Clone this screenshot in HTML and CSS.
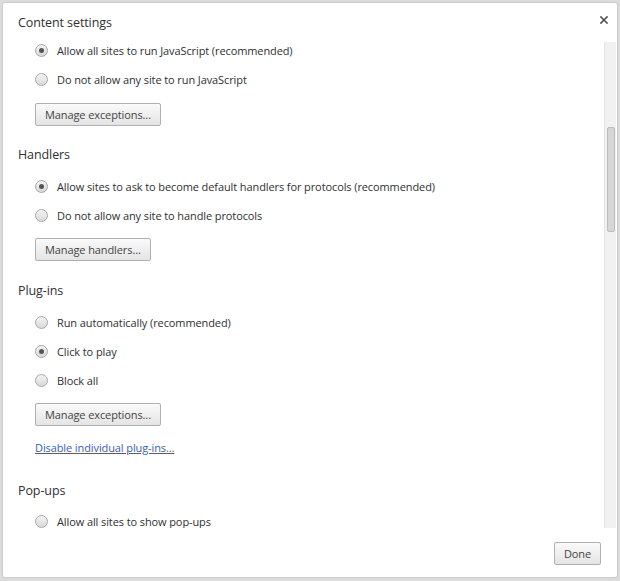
FILE: index.html
```html
<!DOCTYPE html>
<html lang="en">

    <head>
        <meta charset="UTF-8">
        <meta name="viewport" content="width=device-width, initial-scale=1.0">
        <title>Content settings</title>
        <link rel="stylesheet" href="styles.css">
    </head>

    <body>
        <div class="dialog">
            <div class="dialog-head">
                <h1>Content settings</h1>
                <button type="button" class="close" aria-label="Close">
                    <svg width="8" height="8" viewBox="0 0 8 8">
                        <path d="M1 1 L7 7 M7 1 L1 7" stroke="#555" stroke-width="1.7" stroke-linecap="square"/>
                    </svg>
                </button>
            </div>

            <div class="dialog-body">
                <div class="content">
                    <section class="group">
                        <label class="option"><span class="radio checked"></span>Allow all sites to run JavaScript (recommended)</label>
                        <label class="option"><span class="radio"></span>Do not allow any site to run JavaScript</label>
                        <button type="button" class="btn">Manage exceptions...</button>
                    </section>

                    <section class="group">
                        <h2>Handlers</h2>
                        <div class="options">
                            <label class="option"><span class="radio checked"></span>Allow sites to ask to become default handlers for protocols (recommended)</label>
                            <label class="option"><span class="radio"></span>Do not allow any site to handle protocols</label>
                        </div>
                        <button type="button" class="btn">Manage handlers...</button>
                    </section>

                    <section class="group plugins">
                        <h2>Plug-ins</h2>
                        <div class="options">
                            <label class="option"><span class="radio"></span>Run automatically (recommended)</label>
                            <label class="option"><span class="radio checked"></span>Click to play</label>
                            <label class="option"><span class="radio"></span>Block all</label>
                        </div>
                        <button type="button" class="btn">Manage exceptions...</button>
                        <a href="#" class="link">Disable individual plug-ins...</a>
                    </section>

                    <section class="group popups">
                        <h2>Pop-ups</h2>
                        <div class="options">
                            <label class="option"><span class="radio"></span>Allow all sites to show pop-ups</label>
                        </div>
                    </section>
                </div>

                <div class="scrollbar">
                    <div class="thumb"></div>
                </div>
            </div>

            <div class="dialog-foot">
                <button type="button" class="btn done">Done</button>
            </div>
        </div>
    </body>

</html>
```

FILE: styles.css
```css
html,
body {
    margin: 0;
    height: 100%;
}

body {
    background: #dcdcdc;
    padding: 3px 3px 4px 3px;
    box-sizing: border-box;
    font-family: "Open Sans", "Noto Sans", sans-serif;
    font-size: 11px;
    letter-spacing: -0.1px;
    color: #303030;
}

.dialog {
    height: 100%;
    background: #fff;
    border-radius: 2px;
    box-shadow: 0 0 2px rgba(0, 0, 0, 0.25);
    display: flex;
    flex-direction: column;
}

.dialog-head {
    height: 33px;
    display: flex;
    justify-content: space-between;
    align-items: flex-start;
    padding: 0 9px 0 15px;
}

.dialog-head h1 {
    margin: 10px 0 0 0;
    font-size: 12.5px;
    font-weight: normal;
    line-height: 20px;
}

.close {
    margin-top: 9px;
    padding: 0;
    border: 0;
    background: none;
    width: 8px;
    height: 8px;
}

.dialog-body {
    flex: 1;
    display: flex;
    min-height: 0;
}

.content {
    flex: 1;
    overflow: hidden;
    padding-left: 15px;
}

.group h2 {
    margin: 19px 0 7px 0;
    font-size: 12.5px;
    font-weight: normal;
    line-height: 20px;
}

.plugins h2 {
    margin-top: 20px;
}

.option {
    display: flex;
    align-items: center;
    height: 29px;
    padding-left: 17px;
}

.radio {
    width: 11px;
    height: 11px;
    border: 1px solid #a8a8a8;
    border-radius: 50%;
    background: linear-gradient(#f4f4f4, #d8d8d8);
    margin-right: 9px;
    position: relative;
}

.radio.checked::after {
    content: "";
    position: absolute;
    left: 3px;
    top: 3px;
    width: 5px;
    height: 5px;
    border-radius: 50%;
    background: #555;
}

.btn {
    display: block;
    margin: 8px 0 0 17px;
    height: 23px;
    padding: 0 9px;
    border: 1px solid #b0b0b0;
    border-radius: 2px;
    background: linear-gradient(#fafafa, #e4e4e4);
    font-family: inherit;
    font-size: 11px;
    letter-spacing: -0.1px;
    color: #444;
}

.group:first-child .btn {
    margin-top: 9px;
}

.link {
    display: inline-block;
    margin: 12px 0 0 17px;
    line-height: 20px;
    color: #3561b0;
}

.popups h2 {
    margin: 23px 0 6px 0;
}

.scrollbar {
    width: 12px;
    margin: 6px 1px 0 0;
    background: #f1f1f1;
    border-left: 1px solid #e3e3e3;
    box-sizing: border-box;
    padding: 85px 1px 0 2px;
}

.thumb {
    height: 103px;
    background: #d6d6d6;
    border: 1px solid #bdbdbd;
    border-radius: 2px;
}

.dialog-foot {
    height: 49px;
    display: flex;
    justify-content: flex-end;
    align-items: flex-start;
    padding-right: 16px;
}

.btn.done {
    margin: 14px 0 0 0;
    width: 47px;
    padding: 0;
}
```
